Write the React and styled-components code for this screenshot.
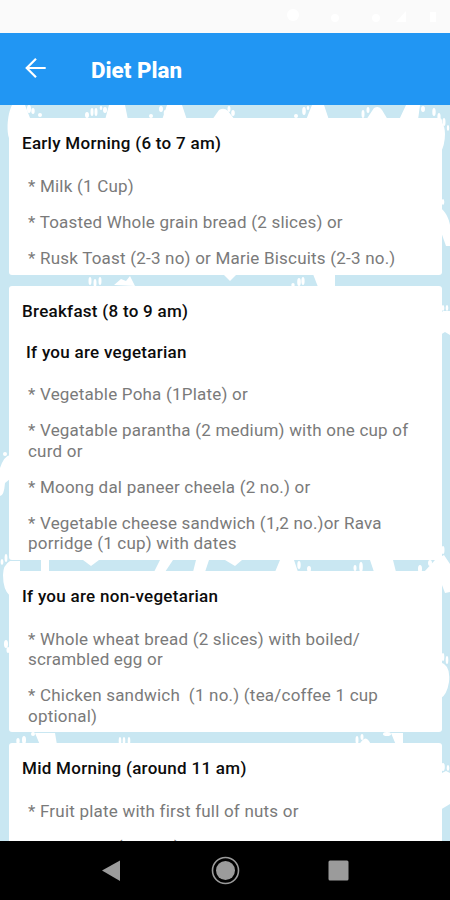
import React from "react";
import styled, { createGlobalStyle } from "styled-components";

const GlobalReset = createGlobalStyle`
  html,
  body,
  #root {
    margin: 0;
    padding: 0;
    box-sizing: border-box;
  }`;

const Screen = styled.div`
  width: 450px;
  height: 900px;
  display: flex;
  flex-direction: column;
  overflow: hidden;
  background-color: #c9e7f2;
  font-family: Roboto, sans-serif;
`;

const StatusBar = styled.div`
  flex: 0 0 33px;
  display: flex;
  align-items: center;
  justify-content: flex-end;
  background-color: #fafafa;
`;

const AppBar = styled.header`
  flex: 0 0 72px;
  display: flex;
  align-items: center;
  background-color: #2196f3;
  color: white;
`;

const BackButton = styled.button`
  width: 91px;
  height: 72px;
  padding: 0 0 2px 25px;
  display: flex;
  align-items: center;
  background: none;
  border: none;
  color: inherit;
  cursor: pointer;
`;

const Title = styled.h1`
  margin: 0;
  padding-top: 2px;
  font-size: 22.4px;
  line-height: 26px;
  font-weight: 800;
  letter-spacing: 0;
`;

const Content = styled.main`
  position: relative;
  flex: 0 0 736px;
  box-sizing: border-box;
  display: flex;
  flex-direction: column;
  gap: 11px;
  padding: 13px 8px 0 9px;
  overflow: hidden;
`;

const Backdrop = styled.svg`
  position: absolute;
  top: 0;
  left: 0;
`;

const Card = styled.section`
  position: relative;
  flex: 0 0 auto;
  height: ${(props) => props.$height}px;
  box-sizing: border-box;
  padding: 15px 20px 0 13px;
  border-radius: 3px;
  background-color: white;
`;

const Heading = styled.h2`
  margin: 0;
  padding-left: ${(props) => (props.$indent ? 4 : 0)}px;
  padding-top: ${(props) => (props.$indent ? 19.5 : 0)}px;
  font-size: 17px;
  line-height: 21px;
  font-weight: 500;
  letter-spacing: 0.28px;
  color: #0c0c0c;
  white-space: nowrap;
`;

const Items = styled.ul`
  margin: 0;
  padding: 21.6px 0 0 6px;
  display: flex;
  flex-direction: column;
  gap: 15.5px;
  list-style: none;
`;

const Item = styled.li`
  font-size: 17px;
  line-height: 20.5px;
  letter-spacing: 0.21px;
  color: #7a7a7a;
  white-space: pre;
`;

const NavBar = styled.nav`
  flex: 0 0 59px;
  display: flex;
  justify-content: center;
  align-items: center;
  gap: 84px;
  background-color: black;
`;

const NavIcon = styled.svg`
  width: 29px;
  height: 29px;
`;

const heels = [
  "M12 0H25L30 13V35H10C6 29 7 10 12 0Z",
  "M109 0H125L128 15H105Z",
  "M167 0H182L187 15H162Z",
  "M212 15L219 5Q224 2 228 6L235 15Z",
  "M312 0H324L329 15H306Z",
  "M366 15L374 3Q379 0 382 5L388 15Z",
  "M406 0H420L418 15H399Z",
  "M428 17C436 9 445 15 445 29Q445 40 440 49V17Z",
  "M114 180L121 174L126 176L130 171L135 181Z",
  "M223 169H237L230 176Z",
  "M313 169H335V182H318Z",
  "M440 103C445 105 449 114 450 120V141H446L440 124Z",
  "M440 209L443 206H450V230L445 227L440 230Z",
  "M10 350V374L5 378Q4 391 0 391V363Q4 351 10 350Z",
  "M10 456Q3 460 3 470Q3 485 10 491V467H20V456Z",
  "M41 455H49V467H41Z",
  "M83 455H99L91 461Z",
  "M160 455H173L165 467H154Z",
  "M196 455H209L205 467H193Z",
  "M225 455H242L235 461Z",
  "M280 455H294L298 467H275Z",
  "M370 455H393L396 467H374Z",
  "M424 467L435 455L444 450L450 459V487L445 488L439 472Z",
  "M35 628H55L57 640H40Z",
  "M359 640Q366 627 371 640Z",
  "M391 628H403V640H396Z",
  "M440 557Q451 560 449 577Q447 590 440 594Z",
  "M440 669L446 666L450 668V699L440 705Z",
];

const toes = [
  [29, 4, 2, 4], [33, 6, 1.7, 3], [40, 10, 2, 2],
  [87, 10, 2, 3], [92, 7, 1.5, 4], [96, 7, 1.5, 4], [101, 3, 1.3, 2],
  [105, 5, 2, 3], [151, 11, 2, 2], [161, 4, 2, 3], [165, 8, 1.3, 3],
  [229, 4, 1.5, 3], [233, 8, 1.8, 3], [296, 11, 2, 2],
  [304, 6, 1.8, 4], [308, 3, 1.3, 2], [363, 9, 1.5, 4], [368, 5, 1.5, 3],
  [423, 4, 2, 3], [434, 7, 1.7, 4], [439, 12, 1.6, 4], [444, 17, 1.5, 4], [448, 23, 1.2, 3],
  [90, 176, 1.5, 4], [95, 178, 1.5, 4], [100, 176, 1.5, 4],
  [293, 180, 1.7, 2], [299, 177, 1.8, 4], [303, 176, 1.6, 4],
  [443, 97, 1.3, 3], [443, 203, 1.3, 3], [447, 203, 1.3, 3],
  [5, 349, 2, 2], [2, 457, 1.4, 3], [6, 453, 1.4, 4],
  [299, 460, 1.7, 4], [309, 464, 2, 3], [355, 463, 1.5, 3], [361, 462, 1.8, 5],
  [420, 464, 2, 4], [430, 458, 2, 3], [443, 445, 1.5, 4],
  [6, 539, 2, 4], [8, 545, 1.5, 3], [33, 629, 2, 2],
  [18, 636, 1.7, 3], [24, 635, 2, 4], [120, 636, 1.3, 4], [124, 636, 1.3, 4], [129, 636, 1.3, 4],
  [357, 635, 1.5, 4], [362, 632, 1.5, 3], [387, 629, 4, 2],
  [443, 552, 1.3, 4], [447, 555, 1.3, 4], [443, 662, 1.8, 4], [448, 663, 1.3, 3],
];

const cards = [
  {
    height: 157,
    title: "Early Morning (6 to 7 am)",
    items: [
      "* Milk (1 Cup)",
      "* Toasted Whole grain bread (2 slices) or",
      "* Rusk Toast (2-3 no) or Marie Biscuits (2-3 no.)",
    ],
  },
  {
    height: 274,
    title: "Breakfast (8 to 9 am)",
    subtitle: "If you are vegetarian",
    items: [
      "* Vegetable Poha (1Plate) or",
      "* Vegatable parantha (2 medium) with one cup of\ncurd or",
      "* Moong dal paneer cheela (2 no.) or",
      "* Vegetable cheese sandwich (1,2 no.)or Rava\nporridge (1 cup) with dates",
    ],
  },
  {
    height: 161,
    title: "If you are non-vegetarian",
    items: [
      "* Whole wheat bread (2 slices) with boiled/\nscrambled egg or",
      "* Chicken sandwich  (1 no.) (tea/coffee 1 cup\noptional)",
    ],
  },
  {
    height: 160,
    title: "Mid Morning (around 11 am)",
    items: ["* Fruit plate with first full of nuts or", "* Veg soup (1 bowl) or green salad"],
  },
];

const Footprints = () => (
  <Backdrop width="450" height="736" fill="white" aria-hidden="true">
    {heels.map((d) => (
      <path key={d} d={d} />
    ))}
    {toes.map(([cx, cy, rx, ry]) => (
      <ellipse key={`${cx}-${cy}`} cx={cx} cy={cy} rx={rx} ry={ry} />
    ))}
  </Backdrop>
);

const App = () => {
  return (
    <>
      <GlobalReset />
      <Screen>
        <StatusBar>
          <svg width="175" height="18" fill="white" aria-hidden="true">
            <circle cx="18" cy="7" r="6" />
            <circle cx="60" cy="10" r="4" />
            <circle cx="101" cy="10" r="4" />
            <path d="M121 14L131 3V14Z" />
            <rect x="155" y="4" width="6" height="10" />
          </svg>
        </StatusBar>
        <AppBar>
          <BackButton aria-label="Back">
            <svg width="22" height="22" viewBox="0 0 22 22" fill="none" stroke="currentColor" strokeWidth="2.2">
              <path d="M20.7 11H2.2M11 1.7L1.7 11L11 20.3" />
            </svg>
          </BackButton>
          <Title>Diet Plan</Title>
        </AppBar>
        <Content>
          <Footprints />
          {cards.map((card) => (
            <Card key={card.title} $height={card.height}>
              <Heading>{card.title}</Heading>
              {card.subtitle && <Heading as="h3" $indent>{card.subtitle}</Heading>}
              <Items>
                {card.items.map((item) => (
                  <Item key={item}>{item}</Item>
                ))}
              </Items>
            </Card>
          ))}
        </Content>
        <NavBar>
          <NavIcon viewBox="0 0 29 29">
            <path d="M4 14.5L22 4.5V25Z" fill="#9b9b9b" />
          </NavIcon>
          <NavIcon viewBox="0 0 29 29">
            <circle cx="14.5" cy="14.5" r="13" fill="none" stroke="#9b9b9b" strokeWidth="1.6" />
            <circle cx="14.5" cy="14.5" r="9.5" fill="#9b9b9b" />
          </NavIcon>
          <NavIcon viewBox="0 0 29 29">
            <rect x="4.5" y="4.5" width="20" height="20" rx="1.5" fill="#9b9b9b" />
          </NavIcon>
        </NavBar>
      </Screen>
    </>
  );
};

export default App;
